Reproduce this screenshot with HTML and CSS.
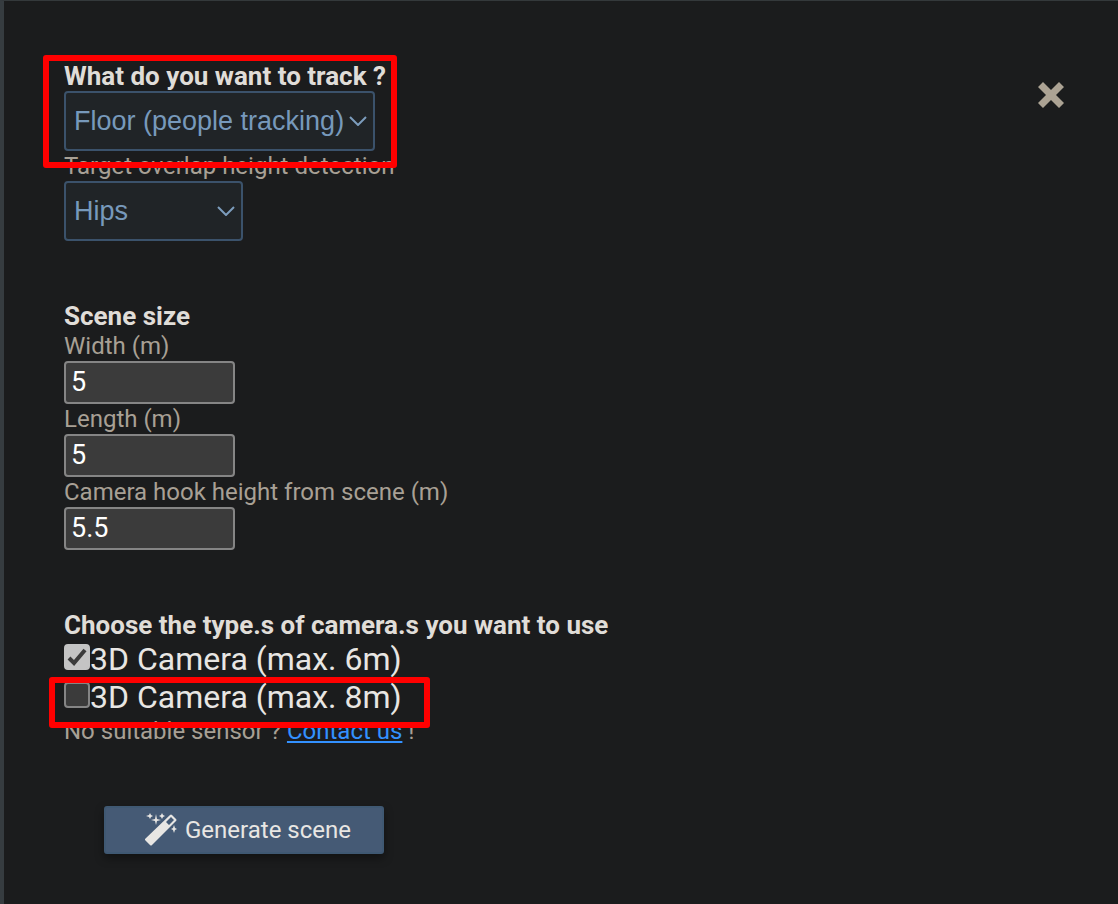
FILE: index.html
```html
<!DOCTYPE html>
<html lang="en">

<head>
  <meta charset="UTF-8">
  <meta name="viewport" content="width=device-width, initial-scale=1.0">
  <title>Generate scene</title>
  <link rel="stylesheet" href="styles.css">
</head>

<body>
  <form class="panel" id="sceneForm">
    <button type="button" class="close-button" id="closeButton" aria-label="Close">
      <svg width="26" height="26" viewBox="0 0 26 26">
        <path d="M5 0 L13 8 L21 0 L26 5 L18 13 L26 21 L21 26 L13 18 L5 26 L0 21 L8 13 L0 5 Z" fill="#aca394" />
      </svg>
    </button>

    <section class="section">
      <div class="field">
        <label class="title" for="tracking">What do you want to track ?</label>
        <select id="tracking" class="select">
          <option>Floor (people tracking)</option>
          <option>Wall</option>
        </select>
        <div class="highlight highlight-tracking"></div>
      </div>
      <div class="field">
        <label for="overlap">Target overlap height detection</label>
        <select id="overlap" class="select select-small">
          <option>Hips</option>
          <option>Shoulders</option>
        </select>
      </div>
    </section>

    <section class="section">
      <h2 class="title">Scene size</h2>
      <div class="field">
        <label for="sceneWidth">Width (m)</label>
        <input type="text" id="sceneWidth" value="5">
      </div>
      <div class="field">
        <label for="sceneLength">Length (m)</label>
        <input type="text" id="sceneLength" value="5">
      </div>
      <div class="field">
        <label for="hookHeight">Camera hook height from scene (m)</label>
        <input type="text" id="hookHeight" value="5.5">
      </div>
    </section>

    <section class="section">
      <h2 class="title">Choose the type.s of camera.s you want to use</h2>
      <div class="camera">
        <input type="checkbox" id="camera6" checked>
        <label for="camera6">3D Camera (max. 6m)</label>
      </div>
      <div class="camera">
        <input type="checkbox" id="camera8">
        <label for="camera8">3D Camera (max. 8m)</label>
        <div class="highlight highlight-camera"></div>
      </div>
      <p class="note">No suitable sensor ? <a href="#contact">Contact us</a> !</p>
    </section>

    <button type="button" class="generate-button" id="generateButton">
      <svg width="32" height="34" viewBox="0 0 32 34" fill="#e8e6e3">
        <path fill-rule="evenodd" d="M0 26 L25 2 Q26 1 27 2 L31 6 Q32 7 31 8 L7 32 Q6 33 5 32 L0 27 Q-1 26 0 26 Z M21 9 L24 12 L29 7 L26 4 Z" />
        <path d="M11 1 L12 6 L16 7 L12 8 L11 12 L10 8 L6 7 L10 6 Z" />
        <path d="M5 0 L6 2 L8 3 L6 4 L5 6 L4 4 L1 3 L4 2 Z" />
        <path d="M17 0 L18 2 L20 3 L18 4 L17 6 L16 4 L14 3 L16 2 Z" />
        <path d="M29 12 L30 15 L32 16 L30 17 L29 20 L28 17 L26 16 L28 15 Z" />
      </svg>
      <span>Generate scene</span>
    </button>
  </form>
</body>

</html>
```

FILE: styles.css
```css
* {
  box-sizing: border-box;
}

body {
  margin: 0;
  background-color: #1b1c1d;
  color: #a8a095;
  font-family: Roboto, sans-serif;
  font-size: 24px;
  line-height: 30px;
}

.panel {
  position: relative;
  display: flex;
  flex-direction: column;
  align-items: flex-start;
  gap: 60px;
  min-height: 100vh;
  padding: 60px;
  border-top: 1px solid #34393b;
  border-left: 4px solid #363c40;
}

.section {
  display: flex;
  flex-direction: column;
  align-items: flex-start;
}

.title {
  margin: 0;
  color: #e0ddd8;
  font-size: 26px;
  font-weight: bold;
  line-height: 30px;
}

.field {
  position: relative;
  display: flex;
  flex-direction: column;
  align-items: flex-start;
}

.select {
  appearance: none;
  width: 311px;
  height: 60px;
  padding: 0 28px 0 8px;
  border: 2px solid #3b526b;
  border-radius: 4px;
  background: #202427 url("data:image/svg+xml,%3Csvg xmlns='http://www.w3.org/2000/svg' width='18' height='10'%3E%3Cpath d='M1 1L9 9L17 1' fill='none' stroke='%237c9dbd' stroke-width='2'/%3E%3C/svg%3E") no-repeat right 6px center;
  color: #7799bb;
  font-family: "Liberation Sans", Arial, sans-serif;
  font-size: 27px;
}

.select-small {
  width: 179px;
}

input[type="text"] {
  width: 171px;
  height: 43px;
  padding: 0 5px 2px;
  border: 2px solid #858585;
  border-radius: 4px;
  background-color: #3b3b3b;
  color: #ffffff;
  font-family: Roboto, sans-serif;
  font-size: 27px;
}

.camera {
  position: relative;
  display: flex;
  align-items: center;
  color: #e8e6e3;
  font-size: 32px;
  line-height: 38px;
}

.camera input {
  appearance: none;
  width: 26px;
  height: 26px;
  margin: 0 0 4px;
  border: 2px solid #858585;
  border-radius: 4px;
  background-color: #3b3b3b;
}

.camera input:checked {
  border-color: #c4c4c4;
  background: #c4c4c4 url("data:image/svg+xml,%3Csvg xmlns='http://www.w3.org/2000/svg' width='20' height='18'%3E%3Cpath d='M2 10L7 15L18 2' fill='none' stroke='%233b3b3b' stroke-width='4'/%3E%3C/svg%3E") no-repeat center;
}

.note {
  margin: 0;
}

.note a {
  color: #3391ff;
}

/* red frames over the options to look at */
.highlight {
  position: absolute;
  border: 6px solid #ff0000;
  border-radius: 3px;
  pointer-events: none;
  z-index: 1;
}

.highlight-tracking {
  top: -6px;
  right: -11px;
  bottom: -17px;
  left: -21px;
}

.highlight-camera {
  top: -1px;
  right: -28px;
  bottom: -12px;
  left: -15px;
}

.close-button {
  position: absolute;
  top: 81px;
  right: 54px;
  padding: 0;
  border: none;
  background: none;
  cursor: pointer;
}

.close-button svg {
  display: block;
}

.generate-button {
  display: flex;
  justify-content: center;
  align-items: center;
  gap: 8px;
  width: 280px;
  height: 48px;
  margin-left: 40px;
  padding: 0 0 0 8px;
  border: 2px solid #3f5872;
  border-radius: 3px;
  background-color: #455a75;
  box-shadow: 0 4px 10px rgba(0, 0, 0, 0.4);
  color: #e8e6e3;
  font-family: Roboto, sans-serif;
  font-size: 24px;
  cursor: pointer;
}
```
